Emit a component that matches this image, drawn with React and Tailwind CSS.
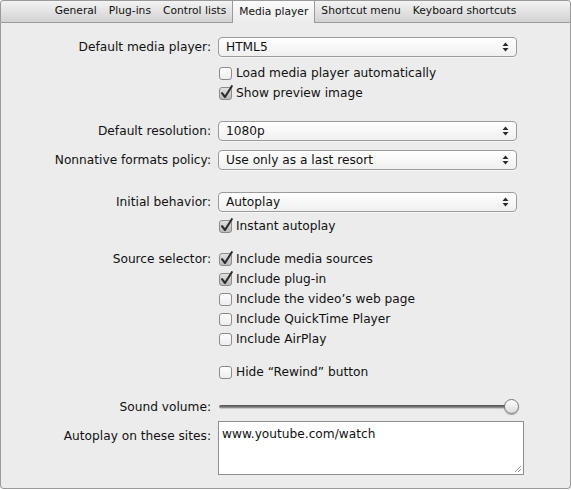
import React from "react";

const font = { fontFamily: '"DejaVu Sans", "Liberation Sans", sans-serif' };

const tabs = ["General", "Plug-ins", "Control lists", "Media player", "Shortcut menu", "Keyboard shortcuts"];

function Checkbox({ checked }) {
  return (
    <svg width="16" height="16" viewBox="0 0 16 16" className="shrink-0">
      <defs>
        <linearGradient id={checked ? "cbOn" : "cbOff"} x1="0" y1="0" x2="0" y2="1">
          <stop offset="0" stopColor={checked ? "#e2e2e2" : "#ffffff"} />
          <stop offset="1" stopColor={checked ? "#b9b9b9" : "#ececec"} />
        </linearGradient>
      </defs>
      <rect x="0.5" y="2.5" width="12" height="12" rx="2.5" fill={`url(#${checked ? "cbOn" : "cbOff"})`} stroke="#8b8b8b" />
      {checked && (
        <path d="M3 8.2 L6 12 L12.8 1.2" fill="none" stroke="#2c2c2c" strokeWidth="2.1" strokeLinecap="round" strokeLinejoin="round" />
      )}
    </svg>
  );
}

function CheckRow({ checked, label, className = "" }) {
  return (
    <div className={`flex items-center h-5 pl-[218px] ${className}`}>
      <Checkbox checked={checked} />
      <span className="ml-[1px]">{label}</span>
    </div>
  );
}

function Select({ value }) {
  return (
    <div className="flex items-center w-[299px] h-5 rounded-[4px] border border-[#9b9b9b] bg-gradient-to-b from-white to-[#f0f0f0] pl-[7px] pr-[7px] shadow-[0_1px_0_rgba(255,255,255,0.6)]">
      <span className="flex-1">{value}</span>
      <svg width="7" height="10" viewBox="0 0 7 10">
        <path d="M3.5 0.5 L6.5 4 L0.5 4 Z" fill="#2a2a2a" />
        <path d="M3.5 9.5 L6.5 6 L0.5 6 Z" fill="#2a2a2a" />
      </svg>
    </div>
  );
}

function LabeledRow({ label, children, className = "" }) {
  return (
    <div className={`flex items-center ${className}`}>
      <div className="w-[210px] text-right">{label}</div>
      <div className="ml-[7px] flex items-center">{children}</div>
    </div>
  );
}

export default function App() {
  return (
    <div className="w-[571px] h-[490px] bg-white text-[#111] text-[12.2px]" style={font}>
      <div className="h-[23px] border border-[#9a9a9a] rounded-t-[3px] bg-gradient-to-b from-[#f3f3f3] to-[#d2d2d2] flex justify-center items-stretch text-[10.7px]">
        {tabs.map((t) =>
          t === "Media player" ? (
            <div key={t} className="px-[6px] flex items-center bg-gradient-to-b from-[#fbfbfb] to-[#ececec] border-x border-[#9a9a9a] -mb-[1px]">
              {t}
            </div>
          ) : (
            <div key={t} className="px-[6px] flex items-center">
              {t}
            </div>
          )
        )}
      </div>
      <div className="h-[466px] bg-[#ececec] border-x border-b border-[#9a9a9a] rounded-b-[4px] pt-[14px]">
        <LabeledRow label="Default media player:" className="h-5">
          <Select value="HTML5" />
        </LabeledRow>
        <CheckRow checked={false} label="Load media player automatically" className="mt-[6px]" />
        <CheckRow checked label="Show preview image" />

        <LabeledRow label="Default resolution:" className="h-5 mt-[18px]">
          <Select value="1080p" />
        </LabeledRow>
        <LabeledRow label="Nonnative formats policy:" className="h-5 mt-[9px]">
          <Select value="Use only as a last resort" />
        </LabeledRow>

        <LabeledRow label="Initial behavior:" className="h-5 mt-[22px]">
          <Select value="Autoplay" />
        </LabeledRow>
        <CheckRow checked label="Instant autoplay" className="mt-[4px]" />

        <div className="flex items-center h-5 mt-[13px]">
          <div className="w-[210px] text-right">Source selector:</div>
          <div className="ml-[8px] flex items-center">
            <Checkbox checked />
            <span className="ml-[1px]">Include media sources</span>
          </div>
        </div>
        <CheckRow checked label="Include plug-in" />
        <CheckRow checked={false} label="Include the video’s web page" />
        <CheckRow checked={false} label="Include QuickTime Player" />
        <CheckRow checked={false} label="Include AirPlay" />

        <CheckRow checked={false} label="Hide “Rewind” button" className="mt-[13px]" />

        <LabeledRow label="Sound volume:" className="h-5 mt-[15px]">
          <div className="relative w-[300px] h-5 flex items-center ml-[1px]">
            <div className="w-[292px] h-[4px] rounded-full bg-gradient-to-b from-[#4a4a4a] to-[#9a9a9a] border-b border-[#c8c8c8]" />
            <div className="absolute right-0 top-[2px] w-[15px] h-[15px] rounded-full border border-[#7a7a7a] bg-gradient-to-b from-white to-[#dcdcdc] shadow-[0_1px_1px_rgba(0,0,0,0.3)]" />
          </div>
        </LabeledRow>

        <div className="flex items-start mt-[4px]">
          <div className="w-[210px] text-right mt-[6px]">Autoplay on these sites:</div>
          <div className="ml-[7px] relative w-[306px] h-[54px] bg-white border border-[#8e8e8e] px-[3px] pt-[3px]">
            www.youtube.com/watch
            <svg width="9" height="9" viewBox="0 0 9 9" className="absolute right-[1px] bottom-[1px]">
              <path d="M8 2 L2 8 M8 5 L5 8" stroke="#8a8a8a" strokeWidth="0.9" />
            </svg>
          </div>
        </div>
      </div>
    </div>
  );
}
